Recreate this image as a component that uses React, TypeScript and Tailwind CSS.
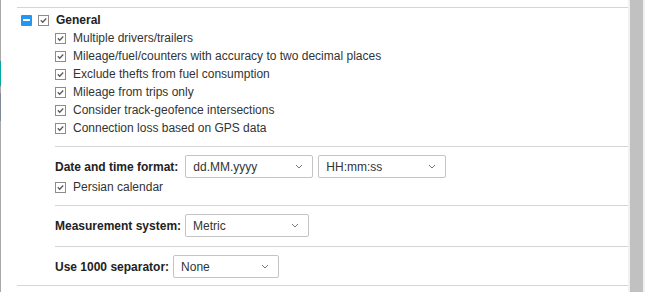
import React from "react";

const Check = () => (
  <div className="w-[11px] h-[11px] border border-[#8c8c8c] bg-white flex items-center justify-center shrink-0">
    <svg width="9" height="9" viewBox="0 0 9 9">
      <path d="M1.8 4.3 L3.7 6.2 L7.2 2.5" fill="none" stroke="#5a5a5a" strokeWidth="1.3" />
    </svg>
  </div>
);

const Row = ({ label }: { label: string }) => (
  <div className="h-[18px] flex items-center gap-[7px]">
    <Check />
    <span>{label}</span>
  </div>
);

const Select = ({ value, w }: { value: string; w: string }) => (
  <div className={`${w} h-[23px] border border-[#c4c4c4] rounded-[2px] bg-white flex items-center justify-between pl-[7px] pr-[9px] shrink-0`}>
    <span className="text-[#333]">{value}</span>
    <svg width="8" height="5" viewBox="0 0 8 5">
      <path d="M1 1 L4 4 L7 1" fill="none" stroke="#777" strokeWidth="1" />
    </svg>
  </div>
);

export default function App() {
  return (
    <div
      className="flex w-[660px] h-[292px] bg-white overflow-hidden text-[12px] text-[#333]"
      style={{ fontFamily: '"Liberation Sans", Arial, sans-serif' }}
    >
      <div className="w-[1px] h-full flex flex-col bg-[#a8a8a8]">
        <div className="h-[61px]" />
        <div className="h-[25px] bg-[#00a99d]" />
        <div className="h-[7px]" />
        <div className="h-[28px] bg-[#7f8a94]" />
      </div>
      <div className="w-[627px] pl-[16px] pt-[7px]">
        <div className="border-t border-[#d4d4d4] pt-[3px]">
          <div className="h-[18px] flex items-center pl-[4px]">
            <div className="w-[11px] h-[11px] rounded-[1px] bg-[#2196f3] flex items-center justify-center shrink-0">
              <div className="w-[7px] h-[2px] bg-white" />
            </div>
            <div className="ml-[6px]">
              <Check />
            </div>
            <span className="ml-[7px] font-bold text-[#222]">General</span>
          </div>
          <div className="pl-[38px]">
            <Row label="Multiple drivers/trailers" />
            <Row label="Mileage/fuel/counters with accuracy to two decimal places" />
            <Row label="Exclude thefts from fuel consumption" />
            <Row label="Mileage from trips only" />
            <Row label="Consider track-geofence intersections" />
            <Row label="Connection loss based on GPS data" />
            <div className="mt-[9px] border-t border-[#d4d4d4] pt-[8px]">
              <div className="flex items-center">
                <span className="font-bold text-[#222] mr-[7px]">Date and time format:</span>
                <Select value="dd.MM.yyyy" w="w-[128px]" />
                <div className="ml-[5px]">
                  <Select value="HH:mm:ss" w="w-[128px]" />
                </div>
              </div>
              <Row label="Persian calendar" />
            </div>
            <div className="mt-[9px] border-t border-[#d4d4d4] pt-[8px]">
              <div className="flex items-center">
                <span className="font-bold text-[#222] mr-[4px]">Measurement system:</span>
                <Select value="Metric" w="w-[124px]" />
              </div>
            </div>
            <div className="mt-[9px] border-t border-[#d4d4d4] pt-[8px]">
              <div className="flex items-center">
                <span className="font-bold text-[#222] mr-[4px]">Use 1000 separator:</span>
                <Select value="None" w="w-[106px]" />
              </div>
            </div>
          </div>
          <div className="mt-[7px] border-t border-[#d4d4d4]" />
        </div>
      </div>
      <div className="w-[17px] h-full flex bg-[#f1f1f1]">
        <div className="w-[2px]" />
        <div className="w-[13px] h-full bg-[#c1c1c1]" />
      </div>
    </div>
  );
}
